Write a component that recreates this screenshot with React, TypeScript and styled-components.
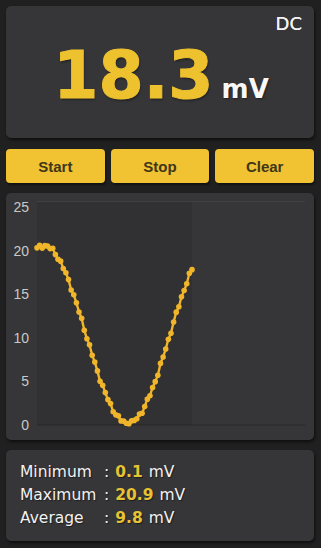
import React from "react";
import styled, { createGlobalStyle } from "styled-components";

const Global = createGlobalStyle`
  html, body { margin: 0; padding: 0; background: #202020; }
  body { font-family: "DejaVu Sans", Verdana, sans-serif; }
`;

const Page = styled.div`
  width: 321px;
  height: 548px;
  box-sizing: border-box;
  padding: 6px 7px 0 6px;
  display: flex;
  flex-direction: column;
  background: #202020;
`;

const Panel = styled.div<{ $h: number; $mt?: number }>`
  height: ${(p) => p.$h}px;
  margin-top: ${(p) => p.$mt ?? 0}px;
  box-sizing: border-box;
  background: #363537;
  border-radius: 5px;
  box-shadow: 1px 2px 3px rgba(0, 0, 0, 0.55);
`;

const DisplayPanel = styled(Panel)`
  display: flex;
  flex-direction: column;
  padding: 9px 12px 0 12px;
`;

const ModeRow = styled.div`
  display: flex;
  justify-content: flex-end;
  font-family: "DejaVu Sans", Verdana, sans-serif;
  font-size: 18px;
  line-height: 18px;
  color: #f4f4f4;
  text-shadow: 0 0 0.6px #f4f4f4;
`;

const Reading = styled.div`
  margin-top: 10px;
  display: flex;
  align-items: baseline;
  justify-content: center;
  gap: 8px;
  padding-left: 2px;
`;

const Value = styled.span`
  font-family: "DejaVu Sans", Verdana, sans-serif;
  font-weight: bold;
  font-size: 65px;
  line-height: 65px;
  color: #eec22f;
  -webkit-text-stroke: 1px #eec22f;
  text-shadow: 1px 2px 2px rgba(0, 0, 0, 0.35);
`;

const Unit = styled.span`
  font-family: "DejaVu Sans", Verdana, sans-serif;
  font-weight: bold;
  font-size: 26px;
  color: #f8f8f8;
  text-shadow: 1px 1px 2px rgba(0, 0, 0, 0.4);
`;

const ButtonBar = styled.div`
  margin-top: 11px;
  display: grid;
  grid-template-columns: repeat(3, 1fr);
  gap: 6px;
`;

const Button = styled.button`
  height: 34px;
  border: none;
  border-radius: 4px;
  background: #f1c232;
  color: #3f3718;
  font-family: "Liberation Sans", Arial, sans-serif;
  font-weight: bold;
  font-size: 15px;
  padding: 0;
  box-shadow: 1px 2px 2px rgba(0, 0, 0, 0.45);
  cursor: pointer;
`;

const ChartPanel = styled(Panel)`
  display: block;
  overflow: hidden;
`;

const StatsPanel = styled(Panel)`
  padding: 11px 14px;
  display: flex;
  flex-direction: column;
`;

const StatRow = styled.div`
  display: flex;
  align-items: baseline;
  height: 23px;
  line-height: 23px;
  font-family: "DejaVu Sans", Verdana, sans-serif;
  font-size: 15.5px;
  color: #f2f2f2;
  text-shadow: 1px 1px 1px rgba(0, 0, 0, 0.45);
  white-space: pre;
`;

const StatLabel = styled.span`
  width: 84px;
`;

const Colon = styled.span`
  margin-right: 6px;
`;

const StatValue = styled.span`
  font-weight: bold;
  color: #e6c235;
  font-size: 15.5px;
`;

const StatUnit = styled.span`
  margin-left: 6px;
`;

// ---- chart data ----
const N = 60;
const X0 = 31;
const X1 = 186;
const points = Array.from({ length: N }, (_, i) => {
  const x = X0 + ((X1 - X0) * i) / (N - 1);
  const px = x + 6;
  let v = 10.35 + 10.2 * Math.cos((2 * Math.PI * (px - 44)) / 168);
  v += 0.18 * Math.sin(i * 2.3) + 0.1 * Math.cos(i * 5.1);
  if (v < 0.1) v = 0.1;
  return { x, v };
});
const yOf = (v: number) => 231.5 - v * 8.7;

const Chart: React.FC = () => {
  const path = points
    .map((p, i) => `${i ? "L" : "M"}${p.x.toFixed(2)},${yOf(p.v).toFixed(2)}`)
    .join(" ");
  return (
    <svg width="307" height="247" viewBox="0 0 307 247">
      <rect x={X0} y={8} width={X1 - X0} height={224} fill="#313032" />
      <line x1={X0} y1={8.5} x2={299} y2={8.5} stroke="#403f41" strokeWidth={1} />
      <line x1={X0} y1={232} x2={299} y2={232} stroke="#29292a" strokeWidth={1.2} />
      {[0, 5, 10, 15, 20, 25].map((t) => (
        <text
          key={t}
          x={23}
          y={yOf(t) + 5}
          textAnchor="end"
          fontFamily="'Liberation Sans', Arial, sans-serif"
          fontSize={14}
          fill="#c9c9c9"
        >
          {t}
        </text>
      ))}
      <path d={path} fill="none" stroke="#f0b52a" strokeWidth={2.4} strokeLinejoin="round" />
      {points.map((p, i) => (
        <circle key={i} cx={p.x} cy={yOf(p.v)} r={2.8} fill="#f0b52a" />
      ))}
    </svg>
  );
};

const stats = [
  { label: "Minimum", value: "0.1" },
  { label: "Maximum", value: "20.9" },
  { label: "Average", value: "9.8" },
];

export default function App() {
  return (
    <>
      <Global />
      <Page>
        <DisplayPanel $h={132}>
          <ModeRow>DC</ModeRow>
          <Reading>
            <Value>18.3</Value>
            <Unit>mV</Unit>
          </Reading>
        </DisplayPanel>
        <ButtonBar>
          <Button>Start</Button>
          <Button>Stop</Button>
          <Button>Clear</Button>
        </ButtonBar>
        <ChartPanel $h={247} $mt={10}>
          <Chart />
        </ChartPanel>
        <StatsPanel $h={91} $mt={10}>
          {stats.map((s) => (
            <StatRow key={s.label}>
              <StatLabel>{s.label}</StatLabel>
              <Colon>:</Colon>
              <StatValue>{s.value}</StatValue>
              <StatUnit>mV</StatUnit>
            </StatRow>
          ))}
        </StatsPanel>
      </Page>
    </>
  );
}
